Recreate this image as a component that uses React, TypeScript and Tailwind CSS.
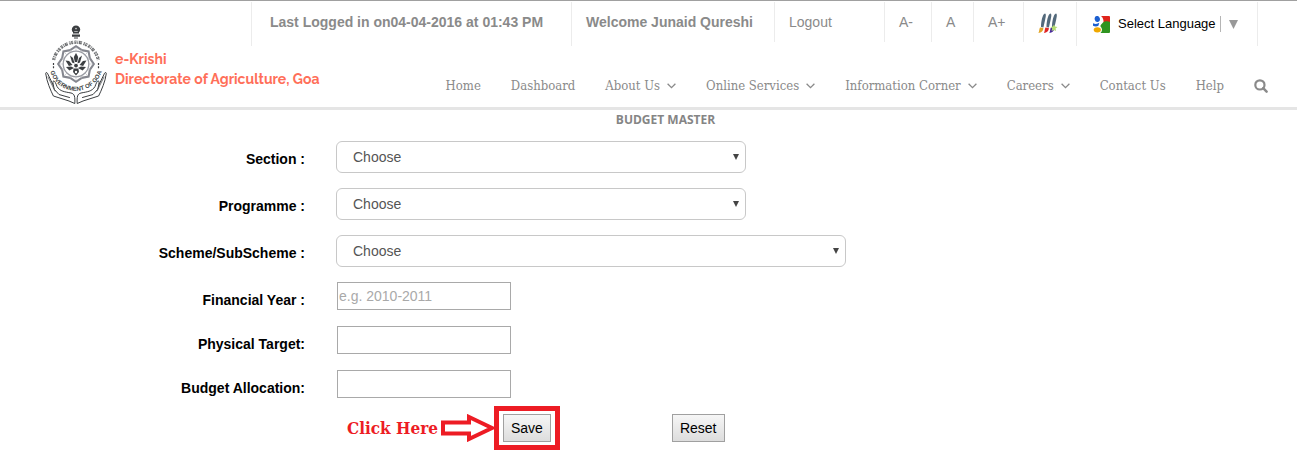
import React from "react";

const ink = "#3c3f42";

function Emblem() {
  const star = Array.from({ length: 8 }, (_, i) => i * 45);
  const rays = Array.from({ length: 16 }, (_, i) => i * 22.5);
  return (
    <svg width="62" height="80" viewBox="0 0 62 80" role="img" aria-label="Government of Goa emblem" fill="none">
      <g fill={ink}>
        <ellipse cx="31" cy="3.6" rx="3.4" ry="3" />
        <ellipse cx="28.4" cy="4.6" rx="1.6" ry="2.6" />
        <ellipse cx="33.6" cy="4.6" rx="1.6" ry="2.6" />
        <path d="M28 7h6v1.6h-6zM27 9.4h8v2.4h-8zM29 12.4h4v1h-4z" />
      </g>
      <circle cx="31" cy="3.6" r="0.8" fill="#ddd" />
      <path d="M8.6 35A23 23 0 0 1 53.4 35" stroke={ink} strokeWidth="3.2" strokeDasharray="2.2 0.8 1 0.7 3 1.6 1.4 0.6 2 1.2" opacity="0.75" />
      <path d="M9 34.5A22.500 22.500 0 0 1 53 34.5" stroke="#fff" strokeWidth="0.7" strokeDasharray="1.3 1.600" />
      <path d="M8.500 38v6M53.500 38v6" stroke={ink} strokeWidth="1.2" strokeDasharray="2 1.2" />
      <g stroke="#85878f" strokeWidth="2.1">
        {star.map((a) => (
          <path key={a} transform={`rotate(${a} 31 39)`} d="M25.2 25.2L31 21.2L36.8 25.2" />
        ))}
      </g>
      <circle cx="31" cy="39" r="12.8" stroke="#9a9ca3" strokeWidth="1.3" />
      <g stroke="#a8aab0" strokeWidth="0.5">
        {rays.map((a) => (
          <path key={a} transform={`rotate(${a} 31 39)`} d="M31 26v-3" />
        ))}
      </g>
      <g fill={ink}>
        <path d="M31 28l2.2 4-1 5h-2.4l-1-5z" />
        <path d="M25 30.5l3 2.5 1.6 5.4-2.6-1z" />
        <path d="M37 30.5l-3 2.5-1.6 5.4 2.6-1z" />
        <path d="M20.5 35.5l3.6.4 3.4 4-3.6 1z" />
        <path d="M41.5 35.5l-3.6.4-3.4 4 3.6 1z" />
        <path d="M21 42l5-.6 3 1.6-4.6 2.4z" />
        <path d="M41 42l-5-.6-3 1.6 4.6 2.4z" />
        <circle cx="31" cy="40.6" r="1.9" />
        <path d="M28.6 43.5h4.8l.6 3.6-3 3.4-3-3.4z" />
      </g>
      <circle cx="31" cy="47" r="1.2" fill="#fff" />
      {[false, true].map((flip) => (
        <g key={String(flip)} transform={flip ? "translate(62 0) scale(-1 1)" : undefined} stroke={ink} strokeWidth="1" strokeLinejoin="round" strokeLinecap="round">
          <path d="M8.400 60.500L2.400 48.200C1.600 46.800 0.400 47.600 0.800 49C1.600 56 5.600 65.500 8.400 71L24 76L29.800 78.500C30.200 71.500 29.500 68.800 26 68C20 66.800 15 66.600 12 61.500C10.600 57.500 9.400 55.200 8.200 56.200C7.400 57 8.600 61.500 9.400 64.500L14 69.500L24.500 72.500" />
          <path d="M3 52L10 66" strokeWidth="0.700" />
        </g>
      ))}
      <path id="emblem-ring" d="M4.500 43A26.800 26.800 0 0 0 57.500 43" />
      <text fill={ink} className="font-['Liberation_Sans'] text-[6px] font-bold">
        <textPath href="#emblem-ring" startOffset="50%" textAnchor="middle">GOVERNMENT OF GOA</textPath>
      </text>
    </svg>
  );
}

function Brushes() {
  return (
    <svg width="20" height="21" viewBox="0 0 20 21" aria-hidden="true">
      <g fill="#53697b">
        <path d="M7 .500C8.400 1 7.800 4 7.200 6.500L5.400 14.500L3 14C3 9 4.400 1 7 .500z" />
        <path d="M12.500 .500C13.900 1 13.300 4 12.700 6.500L10.900 14.500L8.500 14C8.500 9 9.900 1 12.500 .500z" />
        <path d="M18 .500C19.400 1 18.800 4 18.200 6.500L16.400 14.500L14 14C14 9 15.400 1 18 .500z" />
      </g>
      <path d="M2 14.5l3.400.6c0 3-2 4.600-5 4.900C1.400 18.400 1.100 16 2 14.500z" fill="#e3a526" />
      <path d="M7.500 14.500l3.400.6c0 3-2 4.600-5 4.900 1-1.600.7-4 1.600-5.500z" fill="#e02626" />
      <path d="M12.900 14.500l3.400.6c0 3-2 4.600-5 4.900 1-1.600.7-4 1.600-5.500z" fill="#4a2a9a" />
      <path d="M16 11.500l1 2.100 2.500.4-1.900 1.600.5 2.400-2.200-1-2.300.9.6-2.300-1.600-1.700 2.400-.3z" fill="#b5dc72" />
    </svg>
  );
}

function GoogleMark() {
  return (
    <svg width="17" height="17" viewBox="0 0 17 17" aria-hidden="true">
      <path d="M8 0h8a1 1 0 0 1 1 1v6H10.500C10.800 4 10 1.500 8 0z" fill="#e0241b" />
      <path d="M10 6.500C12 5 15 5 17 6v10a1 1 0 0 1-1 1H7.500C9.500 15.500 9.500 12 7.500 10.500 7 9 9 8 10 6.500z" fill="#2f9420" />
      <ellipse cx="4.300" cy="3" rx="2.600" ry="3" transform="rotate(-15 4.300 3)" fill="#1c5fd0" />
      <path d="M0 7.300C2.500 8.400 4.500 8 6.300 6.800L5.400 9.800C3.800 11 1.500 10.600 0 9.800z" fill="#1c5fd0" />
      <ellipse cx="4.300" cy="13.800" rx="3.600" ry="2.600" fill="#f0a800" />
    </svg>
  );
}

function Chevron() {
  return (
    <svg width="9" height="6" viewBox="0 0 9 6" fill="none" stroke="#8a8a8a" strokeWidth="1.3" aria-hidden="true">
      <path d="M0.600 0.800L4.500 4.700L8.400 0.800" />
    </svg>
  );
}

const menu: { label: string; sub?: boolean }[] = [
  { label: "Home" },
  { label: "Dashboard" },
  { label: "About Us", sub: true },
  { label: "Online Services", sub: true },
  { label: "Information Corner", sub: true },
  { label: "Careers", sub: true },
  { label: "Contact Us" },
  { label: "Help" },
];

function Header() {
  return (
    <header className="grid border-t border-b-3 border-t-[#a0a0a0] border-b-[#e5e5e5] text-[#8a8a8a]">
      <a href="#" className="col-start-1 row-start-1 ml-[45px] mb-0.5 flex items-center gap-2 self-end justify-self-start">
        <Emblem />
        <span className="pt-2 font-['Raleway','Lato',sans-serif] text-sm leading-5 font-bold text-[#ff6f59]">
          e-Krishi
          <br />
          Directorate of Agriculture, Goa
        </span>
      </a>
      <div className="col-start-1 row-start-1 flex flex-col items-end justify-self-end pt-px">
        <div className="mr-[39px] flex items-start text-sm leading-10 *:border-[#ececec]">
          <strong className="w-80 border-l pl-[18px] pb-1">Last Logged in on04-04-2016 at 01:43 PM</strong>
          <strong className="w-[203px] border-l pl-3.5 pb-1">Welcome Junaid Qureshi</strong>
          <a href="#" className="w-[110px] border-l pl-3.5">Logout</a>
          <button type="button" className="w-[47px] border-l pl-3.5 text-left">A-</button>
          <button type="button" className="w-[42px] border-l pl-3.5 text-left">A</button>
          <button type="button" className="w-[50px] border-l pl-3.5 text-left">A+</button>
          <button type="button" aria-label="Change theme" className="flex h-10 w-[53px] items-center border-l pl-3.5 pt-0.5">
            <Brushes />
          </button>
          <button type="button" className="flex h-11 w-[182px] items-center border-x pl-4 text-[13px] text-black">
            <GoogleMark />
            <span className="ml-2 leading-4">Select Language</span>
            <span className="ml-1 h-4 w-px bg-[#b5b5b5]" />
            <svg className="ml-2" width="9" height="9" viewBox="0 0 9 9" fill="#999" aria-hidden="true"><path d="M0 0h9L4.500 9z" /></svg>
          </button>
        </div>
        <nav className="mr-[29px] mt-[30px] mb-[11px] flex items-center gap-[30px] font-['DejaVu_Serif_Condensed','DejaVu_Serif',serif] text-[13px] leading-5">
          {menu.map((m) => (
            <a key={m.label} href="#" className="flex items-center gap-[7px] whitespace-nowrap">
              {m.label}
              {m.sub && <Chevron />}
            </a>
          ))}
          <button type="button" aria-label="Search">
            <svg width="14" height="14" viewBox="0 0 14 14" fill="none" stroke="#8a8a8a" aria-hidden="true">
              <circle cx="5.900" cy="5.900" r="4.600" strokeWidth="2.200" />
              <path d="M9.200 9.200L12.600 12.600" strokeWidth="2.500" strokeLinecap="round" />
            </svg>
          </button>
        </nav>
      </div>
    </header>
  );
}

function Row({ id, label, children }: { id: string; label: string; children: React.ReactNode }) {
  return (
    <div className="flex items-end gap-[31px]">
      <label htmlFor={id} className="w-[305px] pb-1 text-right font-bold text-black">{label}</label>
      {children}
    </div>
  );
}

function Choose({ id, wide }: { id: string; wide?: boolean }) {
  return (
    <div className={wide ? "relative w-[510px]" : "relative w-[410px]"}>
      <select id={id} className="block h-8 w-full appearance-none rounded-md border border-[#c8c8c8] bg-white px-4 text-[#555]">
        <option>Choose</option>
      </select>
      <svg className="pointer-events-none absolute top-[13px] right-[7px]" width="6" height="6" viewBox="0 0 6 6" fill="#444" aria-hidden="true">
        <path d="M0 0h6L3 6z" />
      </svg>
    </div>
  );
}

const box = "ml-px h-7 w-[174px] border border-[#a9a9a9] bg-white px-px text-[#555] placeholder:text-[#a9a9a9]";
const push = "h-7 border border-[#a0a0a0] bg-linear-to-b from-[#f6f6f6] to-[#dddddd] px-[7px] text-black";

export default function App() {
  return (
    <div className="min-h-screen bg-white font-['Liberation_Sans',Arial,sans-serif] text-sm">
      <Header />
      <main>
        <h1 className="pl-[34px] text-center font-['Open_Sans',sans-serif] text-xs leading-5 font-bold text-[#858585]">BUDGET MASTER</h1>
        <form className="mt-[11px] flex flex-col gap-[15px]" onSubmit={(e) => e.preventDefault()}>
          <Row id="section" label="Section :"><Choose id="section" /></Row>
          <Row id="programme" label="Programme :"><Choose id="programme" /></Row>
          <Row id="scheme" label="Scheme/SubScheme :"><Choose id="scheme" wide /></Row>
          <div className="flex flex-col gap-4 *:*:[label]:pb-0">
            <Row id="year" label="Financial Year :"><input id="year" placeholder="e.g. 2010-2011" className={box} /></Row>
            <Row id="target" label="Physical Target:"><input id="target" className={box} /></Row>
            <Row id="budget" label="Budget Allocation:"><input id="budget" className={box} /></Row>
          </div>
          <div className="-mt-[7px] ml-[347px] flex items-center">
            <span className="w-[94px] font-['DejaVu_Serif_Condensed','DejaVu_Serif',serif] text-[17px] leading-5 font-bold whitespace-nowrap text-[#ed1c24]">Click Here</span>
            <svg width="53" height="28" viewBox="0 0 53 28" fill="none" stroke="#ed1c24" strokeWidth="4" aria-hidden="true">
              <path d="M2 8.500H28V3L51 14L28 25V19.500H2Z" />
            </svg>
            <div className="border-5 border-[#ed1c24] px-1 py-[3px]">
              <button type="submit" className={push}>Save</button>
            </div>
            <button type="reset" className={`${push} ml-28`}>Reset</button>
          </div>
        </form>
      </main>
    </div>
  );
}
